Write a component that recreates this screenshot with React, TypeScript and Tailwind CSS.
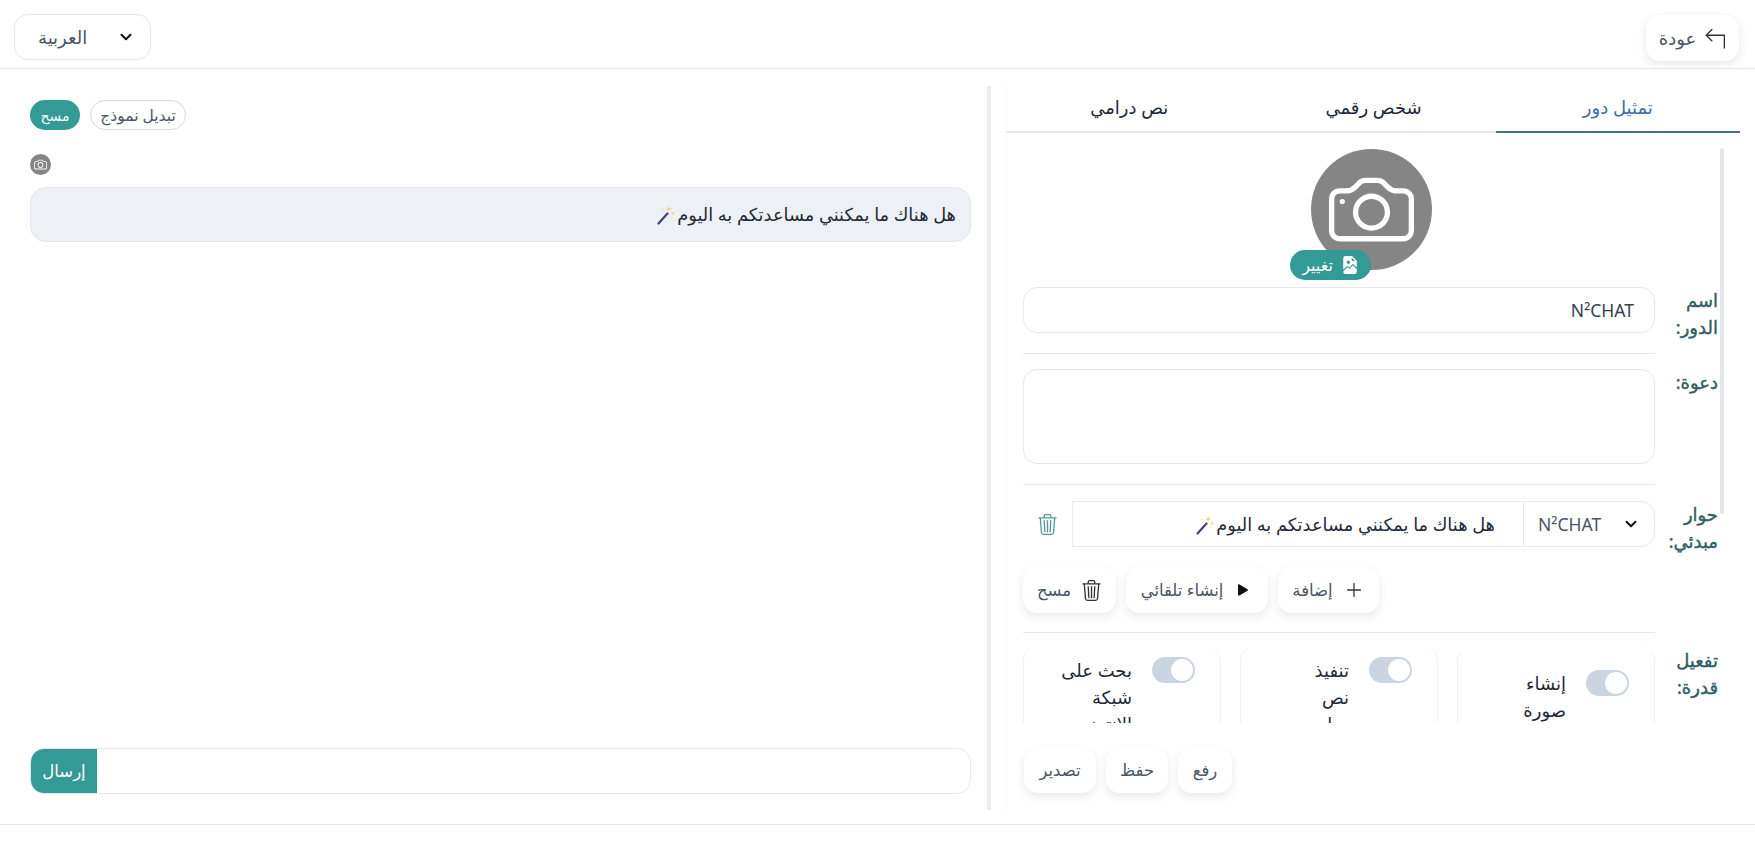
import { BsCamera, BsFileEarmarkImageFill, BsPlayFill, BsTrash3 } from "react-icons/bs"
import { ChevronDown, Plus } from "lucide-react"

const font = "[font-family:'Noto_Sans','DejaVu_Sans',sans-serif]"

function Wand() {
  return (
    <svg viewBox="0 0 20 20" className="inline-block w-[20px] h-[20px] align-[-4px] mr-[1px]">
      <path d="M2.5 18.5 L11.5 8.5" stroke="#46407a" strokeWidth="2.2" strokeLinecap="round" />
      <path d="M13 1l.8 2.2 2.2.8-2.2.8-.8 2.2-.8-2.2-2.2-.8 2.2-.8z" fill="#f4d35e" />
      <path d="M17 6.5l.6 1.4 1.4.6-1.4.6-.6 1.4-.6-1.4-1.4-.6 1.4-.6z" fill="#f4d35e" />
      <path d="M7 3l.5 1 1 .5-1 .5-.5 1-.5-1-1-.5 1-.5z" fill="#f8e08e" />
      <circle cx="15.5" cy="12.5" r="0.8" fill="#f8e08e" />
    </svg>
  )
}

function BackArrow() {
  return (
    <svg viewBox="0 0 20 20" fill="none" stroke="#333" strokeWidth="1.2" className="w-[22px] h-[22px]">
      <path d="M7.5 2 L2 7.5 L7.5 13" />
      <path d="M2 7.5 H18.5 V19.5" />
    </svg>
  )
}

function SoftButton({ children, className = "" }: { children: React.ReactNode; className?: string }) {
  return (
    <button className={`h-[46px] rounded-[14px] bg-white shadow-[0_4px_10px_rgba(0,0,0,0.09)] flex items-center justify-center gap-[10px] text-[16.5px] text-[#4b5563] ${className}`}>
      {children}
    </button>
  )
}

function Label({ children }: { children: React.ReactNode }) {
  return <div className="w-[60px] shrink-0 text-[18px] leading-[27px] [-webkit-text-stroke:0.4px_#2f5f62] text-[#2f5f62]">{children}</div>
}

function Toggle() {
  return (
    <span className="w-[43px] h-[26px] shrink-0 rounded-full bg-[#cbd5e1] flex items-center justify-start px-[2px]">
      <span className="w-[22px] h-[22px] rounded-full bg-white" />
    </span>
  )
}

function Ability({ lines, center }: { lines: string[]; center?: boolean }) {
  return (
    <div className={`w-[198px] h-[110px] border-x border-[#eef1f5] rounded-[14px] flex gap-[20px] pr-[25px] ${center ? "pt-[23px]" : "pt-[10px]"}`}>
      <Toggle />
      <div className="text-[18px] leading-[27px] text-[#1f2937]">
        {lines.map((l) => (
          <div key={l}>{l}</div>
        ))}
      </div>
    </div>
  )
}

export default function App() {
  return (
    <div dir="rtl" className={`${font} h-[848px] overflow-hidden bg-white flex flex-col`}>
      <header className="h-[69px] shrink-0 border-b border-[#e5e9ee] flex items-start justify-between pt-[14px] pr-[16px] pl-[14px]">
        <button className="w-[93px] h-[46px] mt-px rounded-[14px] bg-white shadow-[0_3px_10px_rgba(0,0,0,0.1)] flex items-center justify-center gap-[8px] text-[18px] text-[#4b5563]">
          <BackArrow />
          عودة
        </button>
        <div className="w-[137px] h-[46px] rounded-[14px] border border-[#e5e9ee] flex items-center justify-between pr-[15px] pl-[23px] text-[18px] text-[#4b5563]">
          <ChevronDown size={18} strokeWidth={2.6} className="text-[#111]" />
          العربية
        </div>
      </header>

      <main className="h-[755px] shrink-0 flex pt-[17px] pr-[15px]">
        <section className="w-[734px] h-[724px] shrink-0 border-l border-[#f7f8fa] flex flex-col">
          <div className="h-[47px] shrink-0 flex border-b-2 border-[#e5e9ee] text-[18px]">
            <div className="flex-1 -mb-[2px] border-b-2 border-[#3b6ea5] text-[#3b6ea5] text-center pt-[8px]">تمثيل دور</div>
            <div className="flex-1 text-center pt-[8px] text-[#1f2937]">شخص رقمي</div>
            <div className="flex-1 text-center pt-[8px] text-[#1f2937]">نص درامي</div>
          </div>

          <div className="h-[590px] shrink-0 overflow-hidden relative pt-[16px] pr-[22px] pl-[16px]">
            <div className="absolute top-[15px] right-[16px] w-[4px] h-[366px] rounded bg-[#e4e7ea]" />
            <div className="flex flex-col items-center w-[630px] mr-[32px] relative">
              <div className="w-[121px] h-[121px] rounded-full bg-[#858585] flex items-center justify-center text-white">
                <BsCamera size={85} />
              </div>
              <div className="absolute top-[101px] left-[234px] w-[81px] h-[30px] rounded-full bg-[#339a96] text-white text-[16px] flex items-center justify-center gap-[8px]">
                <BsFileEarmarkImageFill size={18} />
                تغيير
              </div>
            </div>

            <div className="flex gap-[3px] mt-[17px]">
              <Label>
                اسم
                <br />
                الدور:
              </Label>
              <div className="w-[634px]">
                <div className="h-[46px] rounded-[14px] border border-[#e5e9ee] flex items-center px-[20px] text-[17.5px] text-[#374151]">N²CHAT</div>
                <div className="h-px bg-[#e5e9ee] mt-[20px]" />
              </div>
            </div>

            <div className="flex gap-[3px] mt-[15px]">
              <Label>دعوة:</Label>
              <div className="w-[634px]">
                <div className="h-[95px] rounded-[14px] border border-[#e5e9ee]" />
                <div className="h-px bg-[#e5e9ee] mt-[20px]" />
              </div>
            </div>

            <div className="flex gap-[3px] mt-[16px]">
              <Label>
                حوار
                <br />
                مبدئي:
              </Label>
              <div className="w-[634px]">
                <div className="flex items-center h-[46px]">
                  <div dir="ltr" className="w-[132px] h-[46px] shrink-0 rounded-r-[14px] border border-[#e5e9ee] flex items-center justify-between pr-[14px] pl-[14px] text-[17.5px] text-[#4b5563]">
                    N²CHAT
                    <ChevronDown size={18} strokeWidth={2.6} className="text-[#111]" />
                  </div>
                  <div className="w-[451px] h-[46px] shrink-0 border-y border-l border-[#e5e9ee] flex items-center pr-[28px] text-[17.8px] text-[#1f2937]">
                    <span>
                      هل هناك ما يمكنني مساعدتكم به اليوم<Wand />
                    </span>
                  </div>
                  <div className="flex-1 flex justify-center text-[#4f9d9a]">
                    <BsTrash3 size={21} />
                  </div>
                </div>
                <div className="flex justify-end gap-[10px] mt-[20px]">
                  <SoftButton className="w-[101px]">
                    <Plus size={22} strokeWidth={1.4} className="text-[#333]" />
                    إضافة
                  </SoftButton>
                  <SoftButton className="w-[142px]">
                    <BsPlayFill size={20} className="text-[#111]" />
                    إنشاء تلقائي
                  </SoftButton>
                  <SoftButton className="w-[93px]">
                    <BsTrash3 size={21} className="text-[#333]" />
                    مسح
                  </SoftButton>
                </div>
                <div className="h-px bg-[#e5e9ee] mt-[19px]" />
              </div>
            </div>

            <div className="flex gap-[3px] mt-[14px]">
              <Label>
                تفعيل
                <br />
                قدرة:
              </Label>
              <div className="w-[634px] flex justify-between">
                <Ability lines={["إنشاء", "صورة"]} center />
                <Ability lines={["تنفيذ", "نص", "درامي"]} />
                <Ability lines={["بحث على", "شبكة", "الانترنت"]} />
              </div>
            </div>
          </div>

          <div className="flex justify-end gap-[10px] pl-[17px] pt-[24px]">
            <SoftButton className="w-[54px]">رفع</SoftButton>
            <SoftButton className="w-[62px]">حفظ</SoftButton>
            <SoftButton className="w-[72px]">تصدير</SoftButton>
          </div>
        </section>

        <div className="w-[4px] h-[724px] shrink-0 mr-[15px] bg-[#e9ebee]" />

        <section className="w-[941px] h-[724px] shrink-0 mr-[16px] flex flex-col">
          <div className="flex justify-end gap-[10px] pt-[14px]">
            <button className="w-[96px] h-[30px] rounded-full border border-[#d9d9d9] text-[15.5px] pt-[2px] text-[#4b5563]">تبديل نموذج</button>
            <button className="w-[50px] h-[30px] rounded-full bg-[#339a96] text-white text-[14px]">مسح</button>
          </div>
          <div className="flex justify-end mt-[24px]">
            <div className="w-[21px] h-[21px] rounded-full bg-[#858585] flex items-center justify-center text-white">
              <BsCamera size={13} />
            </div>
          </div>
          <div className="h-[55px] mt-[12px] rounded-[16px] border border-[#e2e8f0] bg-[#edf1f5] flex items-center pr-[14px] text-[17.8px] text-[#1f2937]">
            <span>
              هل هناك ما يمكنني مساعدتكم به اليوم<Wand />
            </span>
          </div>
          <div className="mt-auto mb-[16px] h-[46px] rounded-[14px] border border-[#e5e9ee] flex justify-between overflow-hidden">
            <div />
            <button className="w-[66px] bg-[#339a96] text-white text-[16.5px] -my-px">إرسال</button>
          </div>
        </section>
      </main>

      <footer className="h-px shrink-0 bg-[#e5e9ee]" />
    </div>
  )
}
